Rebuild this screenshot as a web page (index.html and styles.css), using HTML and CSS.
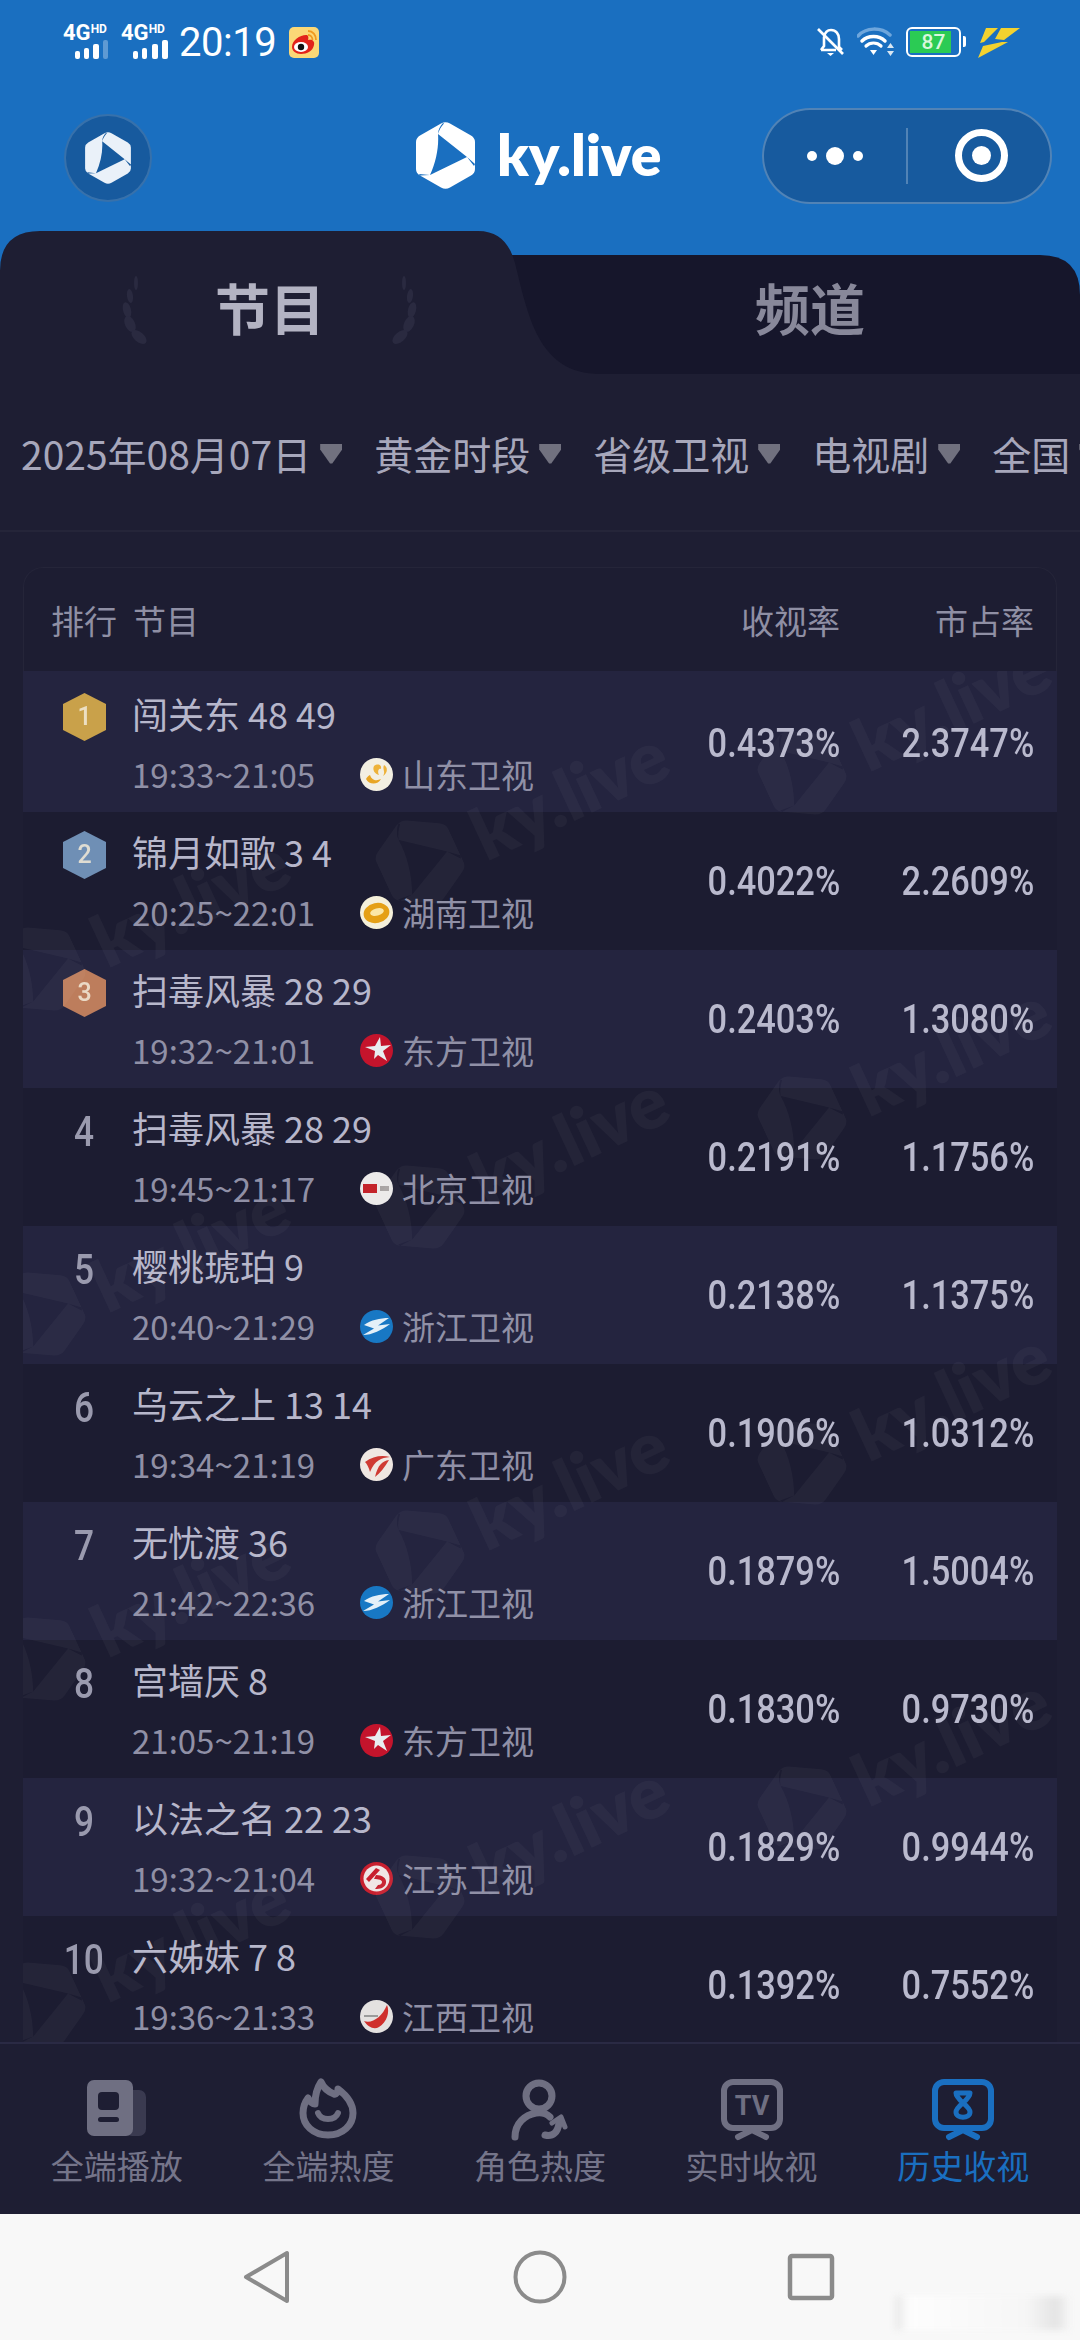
FILE: index.html
```html
<!DOCTYPE html>
<html lang="zh">
<head>
<meta charset="utf-8">
<title>ky.live</title>
<link rel="stylesheet" href="styles.css">
</head>
<body>
<svg class="defs" width="0" height="0" aria-hidden="true">
  <symbol id="kylogo" viewBox="0 0 59 67">
    <path fill="currentColor" fill-rule="evenodd" d="M25 1.5Q29.5-1 34 1.5L55 13.5Q59 16 59 20V47Q59 51 55 53.5L34 65.5Q29.5 68 25 65.5L4 53.5Q0 51 0 47V20Q0 16 4 13.5ZM22 12L51 35L14 53C20 40 23 25 22 12ZM22 12C22 8 24 4 27 1L28 1.5C25 5 23 8 22 12ZM51 35L58 44L59 42ZM14 53L3 52L4 53.4Z"/>
  </symbol>
  <symbol id="ch-sd" viewBox="0 0 33 33"><circle cx="16.5" cy="16.5" r="16.5" fill="#f3efe2"/><path d="M6 21C9 27 18 27 21 21C17 23 12 23 10 17C8 18 7 19 6 21Z" fill="#e8a524"/><path d="M14 8C18 5 22 7 21 11C19 10 17 13 19 17C15 16 12 12 14 8ZM24 7C28 9 28 15 23 18C26 14 22 11 24 7Z" fill="#eeb23a"/></symbol>
  <symbol id="ch-hn" viewBox="0 0 33 33"><circle cx="16.5" cy="16.5" r="16.5" fill="#f5f0da"/><ellipse cx="16.5" cy="17" rx="13" ry="10" fill="#e5a016" transform="rotate(-12 16.5 17)"/><ellipse cx="17" cy="16" rx="7" ry="3.6" fill="#fbe7a8" transform="rotate(-15 17 16)"/></symbol>
  <symbol id="ch-df" viewBox="0 0 33 33"><circle cx="16.5" cy="16.5" r="16.5" fill="#c4142c"/><path d="M20 3L21 12L31 11L23 17L27 27L18 21L14 25L15 17L5 13L15 12Z" fill="#e8edf0"/></symbol>
  <symbol id="ch-bj" viewBox="0 0 33 33"><circle cx="16.5" cy="16.5" r="16.5" fill="#eceaea"/><rect x="3" y="12" width="14" height="9" fill="#c4232b"/><rect x="20" y="14" width="9" height="5" fill="#a9a4a4"/></symbol>
  <symbol id="ch-zj" viewBox="0 0 33 33"><circle cx="16.5" cy="16.5" r="16.5" fill="#1878c4"/><path d="M4 15C11 10 20 8 29 8L18 15.500L30 14C22 20 12 25 3 25L14 18.500Z" fill="#e4f0f8"/></symbol>
  <symbol id="ch-gd" viewBox="0 0 33 33"><circle cx="16.5" cy="16.5" r="16.5" fill="#efe7e2"/><path d="M5 14C13 8 22 7 30 9C21 10 15 12 10 24C9 20 7 16 5 14ZM29 12C22 13 18 17 15 29C20 25 25 19 29 12Z" fill="#cf3a33"/></symbol>
  <symbol id="ch-js" viewBox="0 0 33 33"><circle cx="16.5" cy="16.5" r="16.5" fill="#c8202f"/><circle cx="16.5" cy="16.5" r="13" fill="#f0e6e6"/><path d="M16 6L20 8L9 20L6 17ZM16 13C22 13 27 16 26 21C25 26 20 27 15 27L18 23C21 23 22 21 22 20C22 18 19 17 14 17Z" fill="#c8202f"/></symbol>
  <symbol id="ch-jx" viewBox="0 0 33 33"><circle cx="16.5" cy="16.5" r="16.5" fill="#e4e1e0"/><path d="M4 21C12 24 22 17 27 5C30 12 27 22 19 27C14 30 8 27 4 21Z" fill="#cf2f2c"/><path d="M4 15H18V17H4Z" fill="#9b9b9b"/></symbol>
</svg>

<div class="page">
  <header class="top">
    <div class="status">
      <span class="net"><span class="net-label">4G<sup class="net-hd">HD</sup></span><svg class="bars" width="48" height="22" viewBox="0 0 48 22"><rect x="12" y="12" width="5" height="8" rx="2" fill="#fff"/><rect x="21" y="9" width="5" height="11" rx="2" fill="#fff"/><rect x="30" y="5" width="6" height="15" rx="2" fill="#fff"/><rect x="40" y="1" width="5" height="19" rx="2" fill="#fff" opacity=".3"/></svg></span>
      <span class="net"><span class="net-label">4G<sup class="net-hd">HD</sup></span><svg class="bars" width="48" height="22" viewBox="0 0 48 22"><rect x="12" y="12" width="5" height="8" rx="2" fill="#fff"/><rect x="21" y="9" width="5" height="11" rx="2" fill="#fff"/><rect x="31" y="5" width="6" height="15" rx="2" fill="#fff"/><rect x="41" y="1" width="6" height="19" rx="2" fill="#fff"/></svg></span>
      <span class="clock">20:19</span>
      <svg class="weibo" width="30" height="31" viewBox="0 0 30 31"><rect width="30" height="31" rx="5" fill="#fbd877"/><path d="M3 20C3 13 11 8 17 8C19 8 20 10 19 13C23 12 26 14 25 18C24 24 18 27 12 27C7 27 3 24 3 20Z" fill="#e2231a"/><ellipse cx="12" cy="20" rx="7" ry="5" fill="#fff"/><circle cx="12" cy="20" r="3.2" fill="#111"/><path d="M19 4C24 4 27 8 27 13M19 8C21.500 8 23.500 10 23.500 13" fill="none" stroke="#f09a1e" stroke-width="1.800"/></svg>
      <span class="status-right">
        <svg width="28" height="30" viewBox="0 0 28 30" fill="none" stroke="#fff" stroke-width="2.600"><path d="M7 10C8 5 11 3 14 3C19 3 22 7 22 12V20L25 23M4 23H19M7 10V19L4 23"/><path d="M1 2L26 27"/><path d="M10 26H17L13.500 29Z" fill="#fff" stroke="none"/></svg>
        <svg width="40" height="30" viewBox="0 0 40 30" fill="none" stroke-linecap="round"><path d="M1 9C9 0 24 0 33 8" stroke="#6ea6dc" stroke-width="3.500"/><path d="M5 14C11 8 22 8 28 14" stroke="#fff" stroke-width="3.500"/><path d="M9 19C13 15 20 15 24 19" stroke="#fff" stroke-width="3.200"/><path d="M13 23H20L16.500 28Z" fill="#fff"/><path d="M30 21L33.500 16L37 21ZM30 24L33.500 29L37 24Z" fill="#d8e6f2"/></svg>
        <span class="battery"><span class="battery-fill"><span class="battery-num">87</span></span></span>
        <svg class="bolt" width="42" height="31" viewBox="0 0 42 31"><path d="M8 1H20L6 15L2 16ZM23 1H42L26 13L17 12ZM5 19L24 15H30L0 31Z" fill="#f3d22f"/></svg>
      </span>
    </div>
    <div class="bar">
      <div class="back"><svg class="back-logo"><use href="#kylogo"/></svg></div>
      <div class="brand"><svg class="brand-logo"><use href="#kylogo"/></svg><span class="brand-name">ky.live</span></div>
      <div class="capsule">
        <div class="cap-more"><i class="dot"></i><i class="dot dot-big"></i><i class="dot"></i></div>
        <div class="cap-close"><i class="target"></i></div>
      </div>
    </div>
    <div class="tabs">
      <svg class="tabs-bg" width="1080" height="143" viewBox="0 0 1080 143">
        <path d="M490 24H1040Q1080 24 1080 64V143H490Z" fill="#16162b"/>
        <path d="M0 143V40Q0 0 40 0H478C500 0 510 14 515 32C528 84 538 143 600 143Z" fill="#1e1e33"/>
        <g fill="#2a2a40">
          <ellipse cx="136" cy="52" rx="2" ry="7"/><ellipse cx="130" cy="65" rx="3" ry="7" transform="rotate(-8 130 65)"/><ellipse cx="127" cy="79" rx="4" ry="8" transform="rotate(-14 127 79)"/><ellipse cx="130" cy="93" rx="5" ry="8.500" transform="rotate(-25 130 93)"/><ellipse cx="139" cy="106" rx="5" ry="9" transform="rotate(-50 139 106)"/>
          <ellipse cx="404" cy="52" rx="2" ry="7"/><ellipse cx="410" cy="65" rx="3" ry="7" transform="rotate(8 410 65)"/><ellipse cx="412" cy="79" rx="4" ry="8" transform="rotate(14 412 79)"/><ellipse cx="409" cy="93" rx="5" ry="8.500" transform="rotate(25 409 93)"/><ellipse cx="400" cy="106" rx="5" ry="9" transform="rotate(50 400 106)"/>
        </g>
      </svg>
      <div class="tab tab-on">节目</div>
      <div class="tab tab-off">频道</div>
    </div>
  </header>

  <main class="main">
    <div class="filters">
      <span class="filter">2025年08月07日<i class="tri"></i></span>
      <span class="filter">黄金时段<i class="tri"></i></span>
      <span class="filter">省级卫视<i class="tri"></i></span>
      <span class="filter">电视剧<i class="tri"></i></span>
      <span class="filter">全国<i class="tri"></i></span>
    </div>

    <section class="table">
      <div class="thead">
        <span class="th-rank">排行</span><span>节目</span>
        <span class="num-h num-first">收视率</span><span class="num-h">市占率</span>
      </div>
      <div class="rows">
        <div class="row row-first"><div class="rank"><svg class="hex" viewBox="0 0 43 48"><polygon points="21.500,0 43,11 43,37 21.500,48 0,37 0,11" fill="#c9a14a"/><text x="21.500" y="32" class="hex-num">1</text></svg></div><div class="info"><div class="title">闯关东 48 49</div><div class="sub"><span class="time">19:33~21:05</span><svg class="ch"><use href="#ch-sd"/></svg><span class="chname">山东卫视</span></div></div><div class="val val-first"><span>0.4373%</span></div><div class="val"><span>2.3747%</span></div></div>
        <div class="row"><div class="rank"><svg class="hex" viewBox="0 0 43 48"><polygon points="21.500,0 43,11 43,37 21.500,48 0,37 0,11" fill="#6f8fb5"/><text x="21.500" y="32" class="hex-num">2</text></svg></div><div class="info"><div class="title">锦月如歌 3 4</div><div class="sub"><span class="time">20:25~22:01</span><svg class="ch"><use href="#ch-hn"/></svg><span class="chname">湖南卫视</span></div></div><div class="val val-first"><span>0.4022%</span></div><div class="val"><span>2.2609%</span></div></div>
        <div class="row"><div class="rank"><svg class="hex" viewBox="0 0 43 48"><polygon points="21.500,0 43,11 43,37 21.500,48 0,37 0,11" fill="#bd7d5c"/><text x="21.500" y="32" class="hex-num">3</text></svg></div><div class="info"><div class="title">扫毒风暴 28 29</div><div class="sub"><span class="time">19:32~21:01</span><svg class="ch"><use href="#ch-df"/></svg><span class="chname">东方卫视</span></div></div><div class="val val-first"><span>0.2403%</span></div><div class="val"><span>1.3080%</span></div></div>
        <div class="row"><div class="rank"><span class="rank-num">4</span></div><div class="info"><div class="title">扫毒风暴 28 29</div><div class="sub"><span class="time">19:45~21:17</span><svg class="ch"><use href="#ch-bj"/></svg><span class="chname">北京卫视</span></div></div><div class="val val-first"><span>0.2191%</span></div><div class="val"><span>1.1756%</span></div></div>
        <div class="row"><div class="rank"><span class="rank-num">5</span></div><div class="info"><div class="title">樱桃琥珀 9</div><div class="sub"><span class="time">20:40~21:29</span><svg class="ch"><use href="#ch-zj"/></svg><span class="chname">浙江卫视</span></div></div><div class="val val-first"><span>0.2138%</span></div><div class="val"><span>1.1375%</span></div></div>
        <div class="row"><div class="rank"><span class="rank-num">6</span></div><div class="info"><div class="title">乌云之上 13 14</div><div class="sub"><span class="time">19:34~21:19</span><svg class="ch"><use href="#ch-gd"/></svg><span class="chname">广东卫视</span></div></div><div class="val val-first"><span>0.1906%</span></div><div class="val"><span>1.0312%</span></div></div>
        <div class="row"><div class="rank"><span class="rank-num">7</span></div><div class="info"><div class="title">无忧渡 36</div><div class="sub"><span class="time">21:42~22:36</span><svg class="ch"><use href="#ch-zj"/></svg><span class="chname">浙江卫视</span></div></div><div class="val val-first"><span>0.1879%</span></div><div class="val"><span>1.5004%</span></div></div>
        <div class="row"><div class="rank"><span class="rank-num">8</span></div><div class="info"><div class="title">宫墙厌 8</div><div class="sub"><span class="time">21:05~21:19</span><svg class="ch"><use href="#ch-df"/></svg><span class="chname">东方卫视</span></div></div><div class="val val-first"><span>0.1830%</span></div><div class="val"><span>0.9730%</span></div></div>
        <div class="row"><div class="rank"><span class="rank-num">9</span></div><div class="info"><div class="title">以法之名 22 23</div><div class="sub"><span class="time">19:32~21:04</span><svg class="ch"><use href="#ch-js"/></svg><span class="chname">江苏卫视</span></div></div><div class="val val-first"><span>0.1829%</span></div><div class="val"><span>0.9944%</span></div></div>
        <div class="row"><div class="rank"><span class="rank-num">10</span></div><div class="info"><div class="title">六姊妹 7 8</div><div class="sub"><span class="time">19:36~21:33</span><svg class="ch"><use href="#ch-jx"/></svg><span class="chname">江西卫视</span></div></div><div class="val val-first"><span>0.1392%</span></div><div class="val"><span>0.7552%</span></div></div>

        <div class="wm wm-b1"><svg class="wm-logo"><use href="#kylogo"/></svg><span>ky.live</span></div>
        <div class="wm wm-b2"><svg class="wm-logo"><use href="#kylogo"/></svg><span>ky.live</span></div>
        <div class="wm wm-b3"><svg class="wm-logo"><use href="#kylogo"/></svg><span>ky.live</span></div>
        <div class="wm wm-b4"><svg class="wm-logo"><use href="#kylogo"/></svg><span>ky.live</span></div>
        <div class="wm wm-a1"><svg class="wm-logo"><use href="#kylogo"/></svg><span>ky.live</span></div>
        <div class="wm wm-a2"><svg class="wm-logo"><use href="#kylogo"/></svg><span>ky.live</span></div>
        <div class="wm wm-a3"><svg class="wm-logo"><use href="#kylogo"/></svg><span>ky.live</span></div>
        <div class="wm wm-a4"><svg class="wm-logo"><use href="#kylogo"/></svg><span>ky.live</span></div>
        <div class="wm wm-c1"><svg class="wm-logo"><use href="#kylogo"/></svg><span>ky.live</span></div>
        <div class="wm wm-c2"><svg class="wm-logo"><use href="#kylogo"/></svg><span>ky.live</span></div>
        <div class="wm wm-c3"><svg class="wm-logo"><use href="#kylogo"/></svg><span>ky.live</span></div>
        <div class="wm wm-c4"><svg class="wm-logo"><use href="#kylogo"/></svg><span>ky.live</span></div>
      </div>
    </section>
  </main>

  <nav class="tabbar">
    <div class="tb">
      <svg class="tb-icon" viewBox="0 0 64 64"><rect x="40" y="13" width="21" height="46" rx="7" fill="#3a3a50"/><rect x="2" y="3" width="46" height="56" rx="7" fill="#6f6f82"/><rect x="13" y="15" width="21" height="18" rx="4" fill="#1e1e33"/><rect x="13" y="40" width="21" height="5" rx="2.500" fill="#1e1e33"/></svg>
      <span>全端播放</span>
    </div>
    <div class="tb">
      <svg class="tb-icon" viewBox="0 0 64 64" fill="none" stroke="#6f6f82" stroke-width="7" stroke-linecap="round" stroke-linejoin="round"><path d="M32 58C17 58 7 48 7 36C7 29 9 25 12 21C14 25 16 27 19 27C19 19 21 11 25 5C28 12 33 15 38 17C40 18 42 15 42 12C50 18 57 26 57 36C57 48 47 58 32 58Z"/><path d="M22 36C25 44 39 44 42 36" stroke-width="6"/></svg>
      <span>全端热度</span>
    </div>
    <div class="tb">
      <svg class="tb-icon" viewBox="0 0 64 64" fill="none" stroke="#6f6f82" stroke-width="7" stroke-linecap="round" stroke-linejoin="round"><circle cx="31" cy="19" r="13"/><path d="M7 60C7 46 17 38 28 36C34 35 39 37 42 40"/><path d="M37 58C45 60 50 55 51 46"/><path d="M44 46L53 40L57 50" stroke-width="5"/></svg>
      <span>角色热度</span>
    </div>
    <div class="tb">
      <svg class="tb-icon" viewBox="0 0 64 64"><rect x="4" y="5" width="56" height="46" rx="9" fill="none" stroke="#6f6f82" stroke-width="6"/><path d="M32 53L18 60M32 53L46 60" stroke="#6f6f82" stroke-width="6" stroke-linecap="round"/><text x="32" y="38" class="tv-text">TV</text></svg>
      <span>实时收视</span>
    </div>
    <div class="tb tb-on">
      <svg class="tb-icon" viewBox="0 0 64 64"><rect x="4" y="5" width="56" height="46" rx="9" fill="none" stroke="#1a6fc0" stroke-width="6"/><path d="M32 53L18 60M32 53L46 60" stroke="#1a6fc0" stroke-width="6" stroke-linecap="round"/><path d="M25 16H39C39 23 25 29 25 35C25 42 39 42 39 35C39 29 25 23 25 16Z" fill="none" stroke="#1a6fc0" stroke-width="5" stroke-linejoin="round"/></svg>
      <span>历史收视</span>
    </div>
  </nav>

  <footer class="sysnav">
    <svg width="48" height="54" viewBox="0 0 48 54" fill="none" stroke="#8b8b8b" stroke-width="4" stroke-linejoin="round"><path d="M44 3V51L3 27Z"/></svg>
    <svg width="54" height="54" viewBox="0 0 54 54" fill="none" stroke="#8b8b8b" stroke-width="4"><circle cx="27" cy="27" r="24.500"/></svg>
    <svg width="48" height="48" viewBox="0 0 48 48" fill="none" stroke="#8b8b8b" stroke-width="4.500"><rect x="3" y="3" width="42" height="42" rx="2"/></svg>
    <div class="smudge"></div>
  </footer>
</div>
</body>
</html>
```

FILE: styles.css
```css
* { box-sizing: border-box; }
html, body { margin: 0; padding: 0; }
body {
  width: 1080px;
  height: 2340px;
  overflow: hidden;
  background: #1e1e33;
  font-family: "Noto Sans CJK SC", "Noto Sans", sans-serif;
}
.defs { position: absolute; }
.page { display: flex; flex-direction: column; height: 2340px; }

/* header */
.top { background: #1a6fc0; height: 374px; flex: none; display: flex; flex-direction: column; }
.status { height: 84px; display: flex; align-items: center; padding: 0 60px 0 63px; color: #fff; flex: none; }
.net { width: 48px; margin-right: 10px; display: flex; flex-direction: column; }
.net-label { font: 700 22px/18px Roboto, sans-serif; color: #fff; white-space: nowrap; }
.net-hd { font: 700 12px/10px Roboto, sans-serif; vertical-align: 7px; }
.bars { display: block; margin-top: -3px; }
.clock { font: 400 40px Roboto, sans-serif; letter-spacing: -.5px; }
.weibo { margin-left: 13px; }
.status-right { margin-left: auto; display: flex; align-items: center; }
.status-right svg:first-child { margin-right: 12px; }
.battery { width: 55px; height: 30px; border: 2.5px solid #fff; border-radius: 6px; padding: 2px; margin-left: 9px; display: flex; position: relative; }
.battery::after { content: ""; position: absolute; right: -7px; top: 7px; width: 3px; height: 11px; background: #fff; border-radius: 0 2px 2px 0; }
.battery-fill { width: 87%; background: #2bcb54; display: flex; align-items: center; justify-content: center; }
.battery-num { font: 500 21px/24px Roboto, sans-serif; color: #d8f7dd; transform: translateX(3px); }
.bolt { margin-left: 17px; }

.bar { height: 147px; display: flex; align-items: center; padding: 0 28px 0 64px; flex: none; }
.back { width: 88px; height: 88px; border-radius: 50%; background: #175a9e; border: 2px solid rgba(255,255,255,.14); display: flex; align-items: center; justify-content: center; margin-top: 1px; }
.back-logo { width: 46px; height: 52px; color: #eaf1f9; }
.brand { display: flex; align-items: center; margin-left: 264px; margin-top: -5px; }
.brand-logo { width: 59px; height: 67px; color: #fff; }
.brand-name { font: 800 57px Lato, sans-serif; color: #fff; margin-left: 22px; line-height: 60px; margin-top: -2px; }
.capsule { margin-left: auto; width: 290px; height: 96px; border-radius: 48px; background: #175a9e; border: 2px solid rgba(255,255,255,.25); display: flex; align-items: center; margin-top: -4px; }
.cap-more { width: 144px; height: 56px; border-right: 2px solid rgba(255,255,255,.25); display: flex; align-items: center; justify-content: center; gap: 9px; }
.dot { width: 10px; height: 10px; border-radius: 50%; background: #fff; }
.dot-big { width: 18px; height: 18px; }
.cap-close { flex: 1; display: flex; align-items: center; justify-content: center; padding-left: 5px; }
.target { width: 53px; height: 53px; border-radius: 50%; border: 7px solid #fff; display: flex; align-items: center; justify-content: center; }
.target::after { content: ""; width: 19px; height: 19px; border-radius: 50%; background: #fff; }

.tabs { height: 143px; display: flex; position: relative; flex: none; }
.tabs-bg { position: absolute; left: 0; top: 0; }
.tab { position: relative; width: 540px; font-weight: 700; font-size: 55px; line-height: 60px; padding-top: 45px; text-align: center; }
.tab-on { color: #b3b3c3; }
.tab-off { color: #88889a; }

/* filters */
.main { flex: 1; min-height: 0; }
.filters { height: 158px; padding: 1px 0 0 21px; display: flex; align-items: center; gap: 32px; white-space: nowrap; overflow: hidden; border-bottom: 2px solid #252539; font-size: 39px; color: #a7a7bb; }
.filter { display: flex; align-items: center; flex: none; }
.tri { width: 22px; height: 20px; margin-left: 9px; margin-top: 2px; background: #71717f; clip-path: polygon(0 0, 100% 0, 100% 30%, 55% 100%, 45% 100%, 0 30%); }

/* table */
.table { margin: 35px 23px 0; }
.thead { height: 104px; padding: 0 22px 0 27px; display: flex; align-items: center; font-size: 33px; color: #8f8fa4; background: #1d1d32; border: 1.5px solid #252539; border-bottom: 0; border-radius: 20px 20px 0 0; }
.th-rank { margin-right: 16px; }
.num-h { width: 194px; text-align: right; }
.num-first { margin-left: auto; }

.rows { position: relative; height: 1371px; overflow: hidden; }
.row { height: 138px; display: flex; align-items: flex-start; padding: 0 23px 0 17px; background: #1c1c31; }
.row:nth-child(odd) { background: #24243f; }
.row-first { height: 141px; padding-top: 3px; }
.rank { width: 88px; height: 48px; margin-top: 19px; margin-right: 4px; display: flex; align-items: center; justify-content: center; flex: none; }
.hex { width: 43px; height: 48px; }
.hex-num { font: 500 25px Roboto, sans-serif; fill: #f3ead8; text-anchor: middle; opacity: .85; }
.rank-num { font: 500 42px Roboto, sans-serif; color: #9a9aae; display: inline-block; transform: scaleX(.84); }
.info { margin-top: 15px; flex: none; }
.title { font-size: 36px; line-height: 48px; color: #b7b7cb; white-space: nowrap; }
.sub { margin-top: 15px; height: 44px; display: flex; align-items: center; font-size: 33px; line-height: 44px; color: #9090a6; white-space: nowrap; }
.time { width: 228px; flex: none; }
.ch { width: 33px; height: 33px; margin-right: 9px; flex: none; }
.val { width: 194px; height: 100%; flex: none; display: flex; align-items: center; justify-content: flex-end; font: 500 40px Roboto, sans-serif; color: #b9b9cd; }
.val span { display: inline-block; transform: scaleX(.86); transform-origin: right center; }
.val-first { margin-left: auto; }

/* watermarks */
.wm { position: absolute; display: flex; align-items: center; gap: 20px; color: rgba(255,255,255,.035); transform: rotate(-25deg); transform-origin: 40px 45px; pointer-events: none; font: 800 72px Lato, sans-serif; white-space: nowrap; }
.wm-logo { width: 80px; height: 90px; flex: none; }
.wm-b1 { left: 739px; top: 57px; }
.wm-b2 { left: 739px; top: 402px; }
.wm-b3 { left: 739px; top: 747px; }
.wm-b4 { left: 739px; top: 1092px; }
.wm-a1 { left: 357px; top: 146px; }
.wm-a2 { left: 357px; top: 491px; }
.wm-a3 { left: 357px; top: 836px; }
.wm-a4 { left: 357px; top: 1181px; }
.wm-c1 { left: -22px; top: 253px; }
.wm-c2 { left: -22px; top: 598px; }
.wm-c3 { left: -22px; top: 943px; }
.wm-c4 { left: -22px; top: 1288px; }

/* bottom tabs */
.tabbar { height: 172px; flex: none; display: grid; grid-template-columns: repeat(5, 1fr); padding: 0 11px; background: #1e1e33; border-top: 2px solid #2a2a44; }
.tb { display: flex; flex-direction: column; align-items: center; padding-top: 33px; font-size: 33px; line-height: 44px; color: #75758a; }
.tb-icon { width: 64px; height: 64px; margin-bottom: 2px; }
.tb-on { color: #1a6fc0; }
.tv-text { font: 700 27px Roboto, sans-serif; fill: #6f6f82; text-anchor: middle; }

/* system navigation */
.sysnav { height: 126px; flex: none; background: #f8f8f8; display: flex; align-items: center; position: relative; padding-left: 243px; }
.sysnav svg:nth-child(2) { margin-left: 222px; }
.sysnav svg:nth-child(3) { margin-left: 220px; }
.smudge { position: absolute; right: 10px; bottom: 10px; width: 175px; height: 34px; filter: blur(3px); background: linear-gradient(90deg, #e6e6e6, #fdfdfd 8%, #f6f6f6 75%, #e4e4e4 92%, #f6f6f6); }
```
